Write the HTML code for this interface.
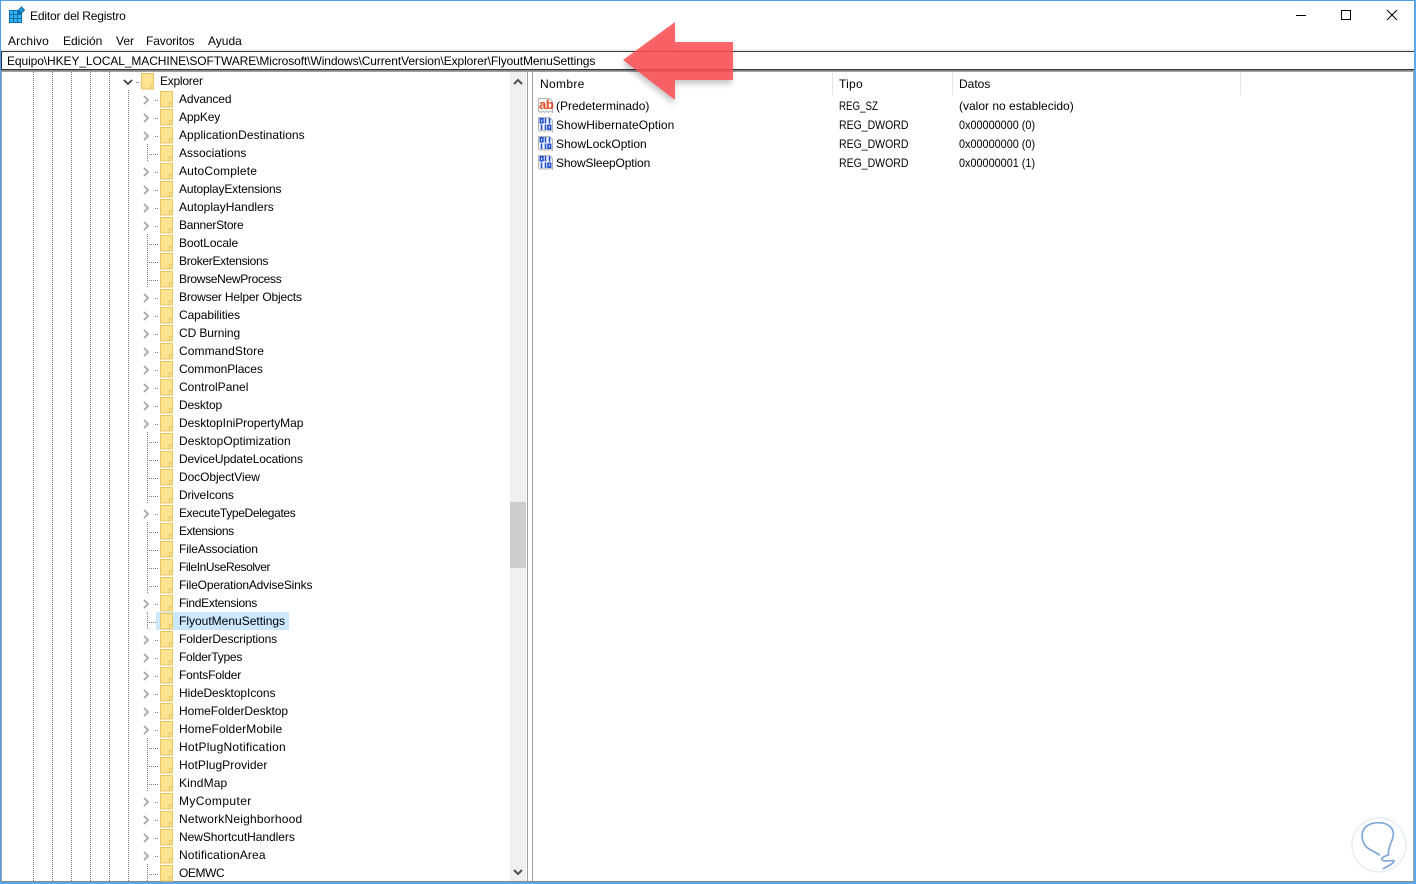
<!DOCTYPE html>
<html><head><meta charset="utf-8"><style>
html,body{margin:0;padding:0;background:#fff}
body{width:1416px;height:884px;position:relative;overflow:hidden;font:12px/18px "Liberation Sans",sans-serif;color:#000}
.t{position:absolute;white-space:nowrap}
.g{transform-origin:0 50%}
#tree{position:absolute;left:179px;top:90px;white-space:nowrap}
#tree div{height:18px}
svg{position:absolute;left:0;top:0}
</style></head><body>
<svg width="1416" height="884" style="z-index:0">
<defs>
<pattern id="f" x="160" y="90" width="13" height="18" patternUnits="userSpaceOnUse">
<path d="M.5 1.500h12v15.500h-12z" fill="#fde492" stroke="#e9c45e" shape-rendering="crispEdges"/>
<path d="M9.500 17v-4.500h3" fill="none" stroke="#e9c45e" shape-rendering="crispEdges"/>
</pattern>
<pattern id="f2" x="141" y="72" width="13" height="18" patternUnits="userSpaceOnUse">
<path d="M.5 1.500h12v15.500h-12z" fill="#fde492" stroke="#e9c45e" shape-rendering="crispEdges"/>
<path d="M9.500 17v-4.500h3" fill="none" stroke="#e9c45e" shape-rendering="crispEdges"/>
</pattern>
<g id="bin"><path d="M.5 .5h11l3 3v11l-2-1.500-2 1.500-2-1.500-2 1.500-2-1.500-2 1.500-2-1.500z" fill="#f6f6f6" stroke="#b5b5b5"/>
<g fill="none" stroke="#1f4fd0" stroke-width="1.600"><rect x="2.300" y="1.800" width="2.600" height="3.900"/><path d="M7.500 1v5.500M11.500 1v5.500M3.500 7.500v5.500M7.500 7.500v5.500"/><rect x="10" y="8.300" width="2.600" height="3.900"/></g></g>
</defs>
<rect width="1416" height="884" fill="#fff"/>
<rect x="0" y="49" width="1416" height="2" fill="#f0f0f0"/>
<rect x="0" y="71" width="1416" height="1" fill="#a0a0a0"/>
<rect x="1.500" y="51.500" width="1413" height="18" fill="#fff" stroke="#333"/>
<rect x="1" y="70" width="1414" height="1" fill="#808890"/>
<rect x="510" y="72" width="16" height="809" fill="#f0f0f0"/>
<rect x="510" y="502" width="16" height="66" fill="#cdcdcd"/>
<path d="M514 84l4-4 4 4M514 870l4 4 4-4" fill="none" stroke="#505050" stroke-width="2"/>
<rect x="527" y="72" width="1" height="809" fill="#9aa0a6"/>
<rect x="532" y="72" width="1" height="809" fill="#9aa0a6"/>
<rect x="1" y="881" width="1413" height="1" fill="#8a8a8a"/>
<rect x="1413" y="71" width="1" height="811" fill="#a0a0a0"/>
<rect x="832" y="72" width="1" height="23" fill="#e5e5e5"/>
<rect x="952" y="72" width="1" height="23" fill="#e5e5e5"/>
<rect x="1240" y="72" width="1" height="23" fill="#e5e5e5"/>
<path d="M33.500 72V881M52.500 72V881M71.500 72V881M90.500 72V881M109.500 72V881M128.500 90V881" fill="none" stroke="#777" stroke-dasharray="1 1" shape-rendering="crispEdges"/>
<path d="M147.500 144v18M147.500 234v54M147.500 432v72M147.500 522v72M147.500 612v18M147.500 738v54M147.500 864v18" fill="none" stroke="#777" stroke-dasharray="1 1" shape-rendering="crispEdges"/>
<path d="M149 154.500h9M149 244.500h9M149 262.500h9M149 280.500h9M149 442.500h9M149 460.500h9M149 478.500h9M149 496.500h9M149 532.500h9M149 550.500h9M149 568.500h9M149 586.500h9M149 622.500h9M149 748.500h9M149 766.500h9M149 784.500h9M149 874.500h9" fill="none" stroke="#777" stroke-dasharray="1 1" shape-rendering="crispEdges"/>
<path d="M155 100.500h4M155 118.500h4M155 136.500h4M155 172.500h4M155 190.500h4M155 208.500h4M155 226.500h4M155 298.500h4M155 316.500h4M155 334.500h4M155 352.500h4M155 370.500h4M155 388.500h4M155 406.500h4M155 424.500h4M155 514.500h4M155 604.500h4M155 640.500h4M155 658.500h4M155 676.500h4M155 694.500h4M155 712.500h4M155 730.500h4M155 802.500h4M155 820.500h4M155 838.500h4M155 856.500h4M136 82.500h4" fill="none" stroke="#777" stroke-dasharray="1 1" shape-rendering="crispEdges"/>
<rect x="156" y="612" width="133" height="18" fill="#cce8ff"/>
<rect x="160" y="90" width="13" height="792" fill="url(#f)"/>
<rect x="141" y="72" width="13" height="18" fill="url(#f2)"/>
<path d="M144 96l4 4-4 4M144 114l4 4-4 4M144 132l4 4-4 4M144 168l4 4-4 4M144 186l4 4-4 4M144 204l4 4-4 4M144 222l4 4-4 4M144 294l4 4-4 4M144 312l4 4-4 4M144 330l4 4-4 4M144 348l4 4-4 4M144 366l4 4-4 4M144 384l4 4-4 4M144 402l4 4-4 4M144 420l4 4-4 4M144 510l4 4-4 4M144 600l4 4-4 4M144 636l4 4-4 4M144 654l4 4-4 4M144 672l4 4-4 4M144 690l4 4-4 4M144 708l4 4-4 4M144 726l4 4-4 4M144 798l4 4-4 4M144 816l4 4-4 4M144 834l4 4-4 4M144 852l4 4-4 4" fill="none" stroke="#a6a6a6" stroke-width="1.800"/>
<path d="M124 80l4 4 4-4" fill="none" stroke="#404040" stroke-width="1.800"/>
<rect x="9" y="10" width="13" height="13" fill="#0e6fae"/>
<path d="M10 11h3v3h-3zM14 11h3v3h-3zM10 15h3v3h-3zM14 15h3v3h-3zM18 15h3v3h-3zM10 19h3v3h-3zM14 19h3v3h-3zM18 19h3v3h-3z" fill="#35b5f5"/>
<path d="M21.500 7l3 3-3 3-3-3z" fill="#2a9ad8" stroke="#0e6fae"/>
<rect x="1296" y="15" width="10" height="1" fill="#000"/>
<rect x="1341.500" y="10.500" width="9" height="9" fill="none" stroke="#000"/>
<path d="M1387 10l10 10M1397 10l-10 10" stroke="#000" fill="none"/>
<path d="M538.500 98.500h11l3 3v11l-2-1.500-2 1.500-2-1.500-2 1.500-2-1.500-2 1.500-2-1.500z" fill="#f6f6f6" stroke="#b5b5b5"/>
<use href="#bin" x="538" y="117"/>
<use href="#bin" x="538" y="136"/>
<use href="#bin" x="538" y="155"/>
<text x="539" y="109" font-family="Liberation Sans" font-weight="bold" font-size="13" letter-spacing="-.4" fill="#e0481e">ab</text>
</svg>
<div class="t" style="left:30px;top:7px;letter-spacing:-.16px">Editor del Registro</div>
<div class="t" style="left:8px;top:32px;letter-spacing:.14px">Archivo</div>
<div class="t" style="left:63px;top:32px">Edición</div>
<div class="t" style="left:116px;top:32px">Ver</div>
<div class="t" style="left:146px;top:32px;letter-spacing:-.1px">Favoritos</div>
<div class="t" style="left:208px;top:32px">Ayuda</div>
<div class="t" style="left:7px;top:52px;letter-spacing:-.093px">Equipo\HKEY_LOCAL_MACHINE\SOFTWARE\Microsoft\Windows\CurrentVersion\Explorer\FlyoutMenuSettings</div>
<div class="t" style="left:160px;top:72px;letter-spacing:-.25px">Explorer</div>
<div id="tree">
<div style="letter-spacing:-.12px">Advanced</div>
<div style="letter-spacing:-.15px">AppKey</div>
<div style="letter-spacing:.04px">ApplicationDestinations</div>
<div>Associations</div>
<div style="letter-spacing:.17px">AutoComplete</div>
<div style="letter-spacing:-.17px">AutoplayExtensions</div>
<div>AutoplayHandlers</div>
<div style="letter-spacing:-.27px">BannerStore</div>
<div style="letter-spacing:-.1px">BootLocale</div>
<div style="letter-spacing:-.31px">BrokerExtensions</div>
<div style="letter-spacing:-.31px">BrowseNewProcess</div>
<div style="letter-spacing:-.18px">Browser Helper Objects</div>
<div style="letter-spacing:-.08px">Capabilities</div>
<div style="letter-spacing:-.1px">CD Burning</div>
<div style="letter-spacing:.08px">CommandStore</div>
<div style="letter-spacing:-.08px">CommonPlaces</div>
<div>ControlPanel</div>
<div style="letter-spacing:-.14px">Desktop</div>
<div style="letter-spacing:-.05px">DesktopIniPropertyMap</div>
<div style="letter-spacing:.05px">DesktopOptimization</div>
<div style="letter-spacing:-.14px">DeviceUpdateLocations</div>
<div style="letter-spacing:-.08px">DocObjectView</div>
<div style="letter-spacing:-.2px">DriveIcons</div>
<div style="letter-spacing:-.35px">ExecuteTypeDelegates</div>
<div style="letter-spacing:-.4px">Extensions</div>
<div style="letter-spacing:-.13px">FileAssociation</div>
<div style="letter-spacing:-.41px">FileInUseResolver</div>
<div style="letter-spacing:-.17px">FileOperationAdviseSinks</div>
<div style="letter-spacing:-.29px">FindExtensions</div>
<div>FlyoutMenuSettings</div>
<div style="letter-spacing:-.11px">FolderDescriptions</div>
<div style="letter-spacing:-.27px">FolderTypes</div>
<div style="letter-spacing:-.18px">FontsFolder</div>
<div style="letter-spacing:-.06px">HideDesktopIcons</div>
<div style="letter-spacing:-.06px">HomeFolderDesktop</div>
<div style="letter-spacing:.12px">HomeFolderMobile</div>
<div style="letter-spacing:.26px">HotPlugNotification</div>
<div style="letter-spacing:.07px">HotPlugProvider</div>
<div style="letter-spacing:.14px">KindMap</div>
<div style="letter-spacing:.4px">MyComputer</div>
<div style="letter-spacing:.21px">NetworkNeighborhood</div>
<div style="letter-spacing:-.05px">NewShortcutHandlers</div>
<div style="letter-spacing:.12px">NotificationArea</div>
<div style="letter-spacing:-.4px">OEMWC</div>
</div>
<div class="t" style="left:540px;top:75px;letter-spacing:.33px">Nombre</div>
<div class="t" style="left:839px;top:75px;letter-spacing:.25px">Tipo</div>
<div class="t" style="left:959px;top:75px">Datos</div>
<div class="t" style="left:556px;top:97px">(Predeterminado)</div>
<div class="t" style="left:556px;top:116px;letter-spacing:.05px">ShowHibernateOption</div>
<div class="t" style="left:556px;top:135px">ShowLockOption</div>
<div class="t" style="left:556px;top:154px;letter-spacing:-.13px">ShowSleepOption</div>
<div class="t g" style="left:839px;top:97px;transform:scaleX(.81)">REG_SZ</div>
<div class="t g" style="left:839px;top:116px;transform:scaleX(.875)">REG_DWORD</div>
<div class="t g" style="left:839px;top:135px;transform:scaleX(.875)">REG_DWORD</div>
<div class="t g" style="left:839px;top:154px;transform:scaleX(.875)">REG_DWORD</div>
<div class="t" style="left:959px;top:97px">(valor no establecido)</div>
<div class="t g" style="left:959px;top:116px;transform:scaleX(.905)">0x00000000 (0)</div>
<div class="t g" style="left:959px;top:135px;transform:scaleX(.905)">0x00000000 (0)</div>
<div class="t g" style="left:959px;top:154px;transform:scaleX(.905)">0x00000001 (1)</div>
<svg width="1416" height="884" style="z-index:2;pointer-events:none">
<defs><filter id="s" x="-20%" y="-20%" width="140%" height="150%"><feGaussianBlur stdDeviation="3"/></filter></defs>
<path d="M623 60L675 22V42H733V80H675V100Z" fill="#000" opacity=".22" filter="url(#s)" transform="translate(-1 4)"/>
<path d="M623 60L675 22V42H733V80H675V100Z" fill="#ff4f55" opacity=".85"/>
<circle cx="1379" cy="845" r="27" fill="#fff" stroke="#e6edf7" stroke-width="1.500"/>
<path transform="translate(1320 800) scale(.3333)" d="M178 165C160 150 135 150 128 120C120 90 140 68 175 68C205 68 222 85 220 105C218 125 205 135 205 165C190 170 178 175 190 182C205 185 225 178 222 185C215 195 200 200 190 206" fill="none" stroke="#7da5d6" stroke-width="5" stroke-linecap="round"/>
<path d="M.5 884V.5H1416" fill="none" stroke="#4f9fe8"/>
<rect x="1414" y="0" width="2" height="884" fill="#5aa6e6"/>
<rect x="0" y="882" width="1416" height="2" fill="#5aa6e6"/>
<rect x="1" y="72" width="1" height="810" fill="#a0a0a0"/>
</svg>
</body></html>
